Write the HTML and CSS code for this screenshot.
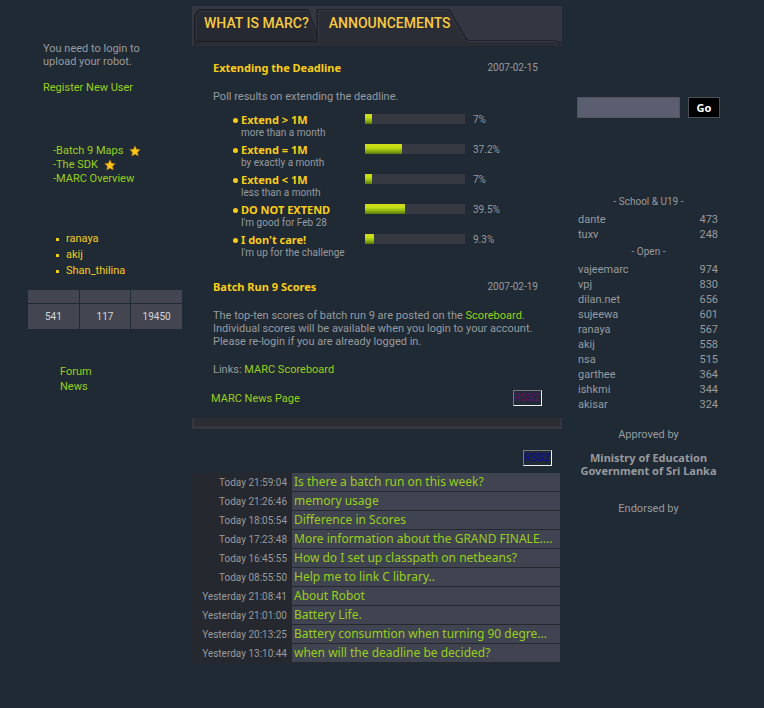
FILE: index.html
```html
<!DOCTYPE html>
<html lang="en">
<head>
<meta charset="utf-8">
<title>MARC</title>
<link rel="stylesheet" href="styles.css">
</head>
<body>
<div class="page">
  <aside class="left">
    <p class="login">You need to login to<br>upload your robot.</p>
    <p class="register"><a href="#">Register New User</a></p>
    <ul class="downloads">
      <li><a href="#">-Batch 9 Maps</a> <svg class="star" viewBox="0 0 12 12"><path d="M6 0.8 7.6 4.2 11.3 4.6 8.6 7.2 9.3 11 6 9.2 2.7 11 3.4 7.2 0.7 4.6 4.4 4.2Z"/></svg></li>
      <li><a href="#">-The SDK</a> <svg class="star" viewBox="0 0 12 12"><path d="M6 0.8 7.6 4.2 11.3 4.6 8.6 7.2 9.3 11 6 9.2 2.7 11 3.4 7.2 0.7 4.6 4.4 4.2Z"/></svg></li>
      <li><a href="#">-MARC Overview</a></li>
    </ul>
    <ul class="users">
      <li>ranaya</li>
      <li>akij</li>
      <li>Shan_thilina</li>
    </ul>
    <table class="stats">
      <thead><tr><th></th><th></th><th></th></tr></thead>
      <tbody><tr><td>541</td><td>117</td><td>19450</td></tr></tbody>
    </table>
    <ul class="community">
      <li><a href="#">Forum</a></li>
      <li><a href="#">News</a></li>
    </ul>
  </aside>

  <main class="center">
    <nav class="tabs">
      <svg class="tabs-art" viewBox="0 0 370 40" preserveAspectRatio="none">
        <rect width="370" height="40" fill="#343641"/>
        <path d="M2 40V12Q2 4 8 4H115L124 29V35H370V40Z" fill="#2a2c35"/>
        <path d="M3 35V10L8 4H115L124 29V35Z" fill="#262932"/>
        <path d="M124 36V3H258L274 30Q276 35 280 35H362Q367 35 367 40H2V36Z" fill="#2b2d36"/>
        <path d="M2.500 35V10L7 3.500H116L124 26V35.500H5Q2.500 37 2.500 40" fill="none" stroke="#1a1d24"/>
        <path d="M4.500 34V11L8 5.500H115L123 30V34.500" fill="none" stroke="#30333d"/>
        <path d="M125.500 34V3.500H257L271.500 30Q273.500 34.500 277 34.500H361Q367 34.500 367 40" fill="none" stroke="#1d2028"/>
        <path d="M126.500 34V4.500H256L271 32Q273 35.500 277 35.500H361Q365.500 35.500 365.500 40" fill="none" stroke="#363944"/>
      </svg>
      <a class="tab" href="#">WHAT IS MARC?</a>
      <a class="tab" href="#">ANNOUNCEMENTS</a>
    </nav>

    <article class="post">
      <header><h2>Extending the Deadline</h2><time>2007-02-15</time></header>
      <p>Poll results on extending the deadline.</p>
      <ul class="poll">
        <li><div class="option"><b>Extend &gt; 1M</b><span>more than a month</span></div><div class="bar"><i style="width:7%"></i></div><span class="pct">7%</span></li>
        <li><div class="option"><b>Extend = 1M</b><span>by exactly a month</span></div><div class="bar"><i style="width:37.2%"></i></div><span class="pct">37.2%</span></li>
        <li><div class="option"><b>Extend &lt; 1M</b><span>less than a month</span></div><div class="bar"><i style="width:7%"></i></div><span class="pct">7%</span></li>
        <li><div class="option"><b>DO NOT EXTEND</b><span>I'm good for Feb 28</span></div><div class="bar"><i style="width:39.5%"></i></div><span class="pct">39.5%</span></li>
        <li><div class="option"><b>I don't care!</b><span>I'm up for the challenge</span></div><div class="bar"><i style="width:9.3%"></i></div><span class="pct">9.3%</span></li>
      </ul>
    </article>

    <article class="post">
      <header><h2>Batch Run 9 Scores</h2><time>2007-02-19</time></header>
      <p>The top-ten scores of batch run 9 are posted on the <a href="#">Scoreboard</a>.<br>Individual scores will be available when you login to your account.<br>Please re-login if you are already logged in.</p>
      <p>Links: <a href="#">MARC Scoreboard</a></p>
    </article>

    <div class="news"><a href="#">MARC News Page</a><a class="rss visited" href="#">RSS2</a></div>
    <div class="panel-foot"></div>
    <div class="forum-rss"><a class="rss" href="#">RSS2</a></div>

    <table class="topics">
      <tr><td>Today 21:59:04</td><td><a href="#">Is there a batch run on this week?</a></td></tr>
      <tr><td>Today 21:26:46</td><td><a href="#">memory usage</a></td></tr>
      <tr><td>Today 18:05:54</td><td><a href="#">Difference in Scores</a></td></tr>
      <tr><td>Today 17:23:48</td><td><a href="#">More information about the GRAND FINALE....</a></td></tr>
      <tr><td>Today 16:45:55</td><td><a href="#">How do I set up classpath on netbeans?</a></td></tr>
      <tr><td>Today 08:55:50</td><td><a href="#">Help me to link C library..</a></td></tr>
      <tr><td>Yesterday 21:08:41</td><td><a href="#">About Robot</a></td></tr>
      <tr><td>Yesterday 21:01:00</td><td><a href="#">Battery Life.</a></td></tr>
      <tr><td>Yesterday 20:13:25</td><td><a href="#">Battery consumtion when turning 90 degre...</a></td></tr>
      <tr><td>Yesterday 13:10:44</td><td><a href="#">when will the deadline be decided?</a></td></tr>
    </table>
  </main>

  <aside class="right">
    <form class="search">
      <input type="text" aria-label="Search">
      <button type="button">Go</button>
    </form>
    <table class="scores">
      <caption>- School &amp; U19 -</caption>
      <tr><td>dante</td><td>473</td></tr>
      <tr><td>tuxv</td><td>248</td></tr>
    </table>
    <table class="scores">
      <caption>- Open -</caption>
      <tr><td>vajeemarc</td><td>974</td></tr>
      <tr><td>vpj</td><td>830</td></tr>
      <tr><td>dilan.net</td><td>656</td></tr>
      <tr><td>sujeewa</td><td>601</td></tr>
      <tr><td>ranaya</td><td>567</td></tr>
      <tr><td>akij</td><td>558</td></tr>
      <tr><td>nsa</td><td>515</td></tr>
      <tr><td>garthee</td><td>364</td></tr>
      <tr><td>ishkmi</td><td>344</td></tr>
      <tr><td>akisar</td><td>324</td></tr>
    </table>
    <p class="approved">Approved by</p>
    <p class="ministry">Ministry of Education<br>Government of Sri Lanka</p>
    <p class="endorsed">Endorsed by</p>
  </aside>
</div>
</body>
</html>
```
FILE: styles.css
```css
* { box-sizing: border-box; }
body {
  margin: 0;
  background: #202a34;
  color: #979a9f;
  font: 11px/13px Tahoma, Roboto, sans-serif;
}
p, ul, h2 { margin: 0; padding: 0; }
ul { list-style: none; }
a { color: #98cf1c; text-decoration: none; }
table { border-collapse: separate; border-spacing: 0; }
td, th { padding: 0; }

.page {
  display: grid;
  grid-template-columns: 155px minmax(0, 1fr) 143px;
  padding: 6px 44px 46px 28px;
}

.left { padding-top: 36px; }
.login, .register { padding-left: 15px; white-space: nowrap; }
.register { margin-top: 13px; }
.downloads { margin-top: 50px; padding-left: 25px; line-height: 14px; }
.downloads li { display: flex; align-items: center; gap: 6px; height: 14px; white-space: nowrap; }
.star { width: 12px; height: 12px; fill: #fdc51a; stroke: #9a6a14; stroke-width: 0.5; }
.users { margin-top: 45px; padding-left: 28px; line-height: 16px; color: #f5cb1c; }
.users li { display: flex; align-items: center; gap: 7px; }
.users li::before { content: ""; width: 3px; height: 3px; background: currentColor; }
.stats { width: 100%; margin-top: 11px; table-layout: fixed; font-size: 10px; color: #d5d6d8; }
.stats th, .stats td { background: #434651; border: solid #202a34; border-width: 0 1px 1px 0; text-align: center; }
.stats th { height: 14px; }
.stats td { height: 26px; }
.community { margin-top: 34px; padding-left: 32px; line-height: 15px; }

.center { padding: 0 15px 0 9px; }
.tabs { position: relative; display: flex; height: 40px; padding-left: 12px; gap: 20px; }
.tabs-art { position: absolute; left: 0; top: 0; width: 100%; height: 100%; }
.tab { position: relative; color: #f7c93f; font: 500 14px/34px Roboto, sans-serif; white-space: nowrap; }

.post { padding: 15px 24px 0 21px; }
.post + .post { padding-top: 17px; }
.post header { display: flex; justify-content: space-between; height: 13px; align-items: center; }
.post h2, .option b, .ministry, .search button { font-family: Tahoma, "Noto Sans", sans-serif; font-size: 11px; font-weight: 700; }
.post h2, .option b { color: #f9cd17; }
.post time { font-size: 10px; }
.post p { margin-top: 15px; white-space: nowrap; }
.post header + p { margin-top: 16px; }
.poll { margin: 10px 0 0 20px; }
.poll li { display: grid; grid-template-columns: 132px 100px 1fr; height: 30px; }
.option { position: relative; padding-left: 8px; }
.option::before { content: ""; position: absolute; left: 0; top: 5px; width: 5px; height: 5px; border-radius: 50%; background: #f9cd17; }
.option b { display: block; }
.option span { display: block; font-size: 10px; line-height: 14px; white-space: nowrap; }
.bar { height: 10px; margin-top: 1px; background: #363842; }
.bar i { display: block; height: 10px; background: linear-gradient(#d6d81d, #c3e014 35%, #8dae12 70%, #55780b); }
.pct { padding-left: 8px; font-size: 10px; }

.news { display: flex; align-items: center; justify-content: space-between; margin-top: 14px; padding: 0 20px 0 19px; }
.rss { width: 29px; height: 16px; overflow: hidden; border: 1px solid; border-color: #777b80 #f0f0f0 #f0f0f0 #777b80; color: #0707aa; line-height: 13px; }
.rss.visited { color: #671272; }
.panel-foot { height: 11px; margin-top: 12px; background: #2b2d33; border: solid #343640; border-width: 0 2px 3px 2px; }
.forum-rss { display: flex; justify-content: flex-end; margin: 21px 10px 7px 0; }

.topics { width: 100%; }
.topics td { height: 19px; white-space: nowrap; }
.topics td:first-child { width: 100px; padding-right: 5px; background: #25282f; text-align: right; font-size: 10px; }
.topics td:last-child { padding-left: 2px; background: #404350; border-bottom: 1px solid #25282f; border-right: 2px solid #202a34; font-family: Tahoma, "Noto Sans", sans-serif; font-size: 12px; line-height: 18px; }

.right { padding-top: 91px; }
.search { display: flex; gap: 8px; }
.search input { flex: 1; min-width: 0; height: 21px; padding: 0 2px; border: 1px solid #52535d; background: #5b5d70; color: #fff; font: inherit; }
.search button { width: 32px; height: 21px; padding: 0; border: 1px solid #4b4f57; background: #000; color: #fff; }
.scores { width: 100%; line-height: 15px; }
.scores caption { height: 18px; font-size: 10px; line-height: 15px; }
.search + .scores { margin-top: 76px; }
.scores + .scores { margin-top: 2px; }
.scores td { height: 15px; padding: 0 2px 0 1px; }
.scores td:last-child { text-align: right; }
.approved, .ministry, .endorsed { text-align: center; white-space: nowrap; }
.approved { margin-top: 16px; }
.ministry { margin-top: 10px; }
.endorsed { margin-top: 25px; }
```
